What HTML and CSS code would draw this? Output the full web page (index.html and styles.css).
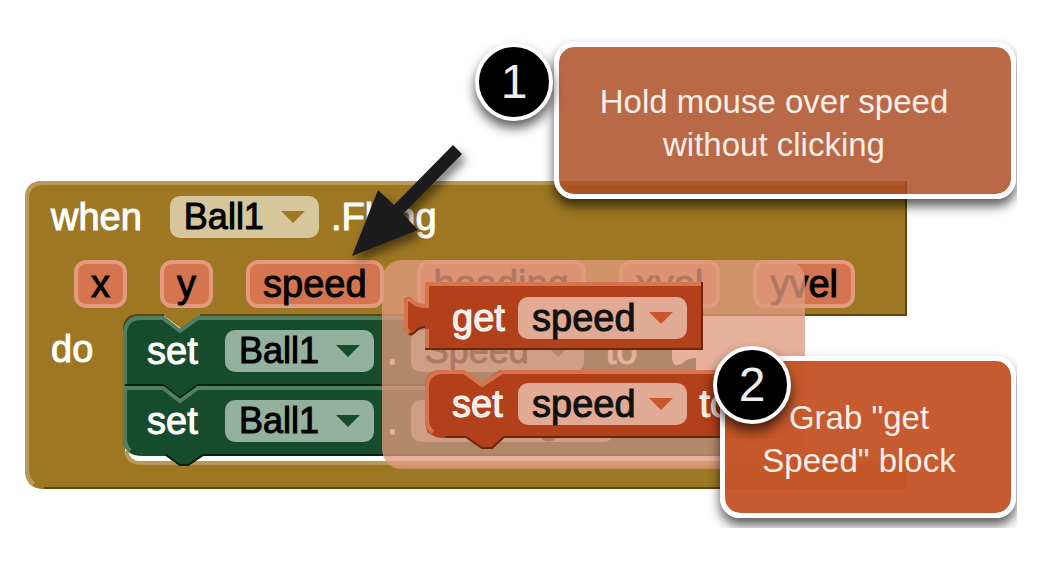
FILE: index.html
```html
<!DOCTYPE html>
<html lang="en">
<head>
<meta charset="utf-8">
<title>Ball1.Flung blocks</title>
<link rel="stylesheet" href="styles.css">
</head>
<body>
<main class="workspace">
  <section class="block event">
    <svg class="shape" width="886" height="314" viewBox="0 0 886 314" aria-hidden="true">
      <path class="gold" d="M18 2H883V137H176L158 150L140 137H113Q101 137 101 150V268Q101 284 116 284H883V310H20Q1 310 1 290V20Q1 2 18 2Z"/>
      <path class="gold-light" d="M882 4H20Q3 4 3 20V290Q3 301 10 305M102 272Q104 284 116 284H883"/>
      <path class="gold-dark" d="M882 2V136H176M140 136H113Q100 137 100 150M883 309H20"/>
    </svg>
    <div class="row title"><span class="word">when</span><button class="field gold-field">Ball1<i class="caret"></i></button><span class="word">.Flung</span></div>
    <div class="row params"><button class="param">x</button><button class="param">y</button><button class="param">speed</button><button class="param">heading</button><button class="param">xvel</button><button class="param">yvel</button></div>
    <div class="body">
      <span class="word do">do</span>
      <div class="stack">
        <div class="setter">
          <svg class="shape" width="610" height="90" viewBox="0 0 610 90" aria-hidden="true">
            <path class="green" d="M16 0H40L57 13L75 0H573V18Q562 18 559 15Q557 12 554 11Q549 11 549 16V42Q549 47 553 49Q557 50 561 46Q565 42 573 42V70H76L57 84L40 70H0V16Q0 0 16 0Z"/>
            <path class="green-light" d="M2 70V18Q2 2 18 2H40L57 15L75 2H573"/>
          </svg>
          <span class="word lead">set</span><button class="field green-field">Ball1<i class="caret"></i></button><span class="word">.</span><button class="field green-field">Speed<i class="caret"></i></button><span class="word tail">to</span>
        </div>
        <div class="setter">
          <svg class="shape" width="610" height="90" viewBox="0 0 610 90" aria-hidden="true">
            <path class="green" d="M0 0H40L57 13L75 0H604V70H80L65 80H57L43 70H20Q0 70 0 52Z"/>
            <path class="green-dark" d="M2 -1H40L57 12L75 -1H573M604 69H80L65 79H57L43 69"/>
            <path class="green-light" d="M2 2H40L57 15L75 2H604M2 0V52Q2 60 7 65"/>
          </svg>
          <span class="word lead">set</span><button class="field green-field">Ball1<i class="caret"></i></button><span class="word">.</span><button class="field green-field">Heading<i class="caret"></i></button>
        </div>
      </div>
    </div>
  </section>

  <section class="flyout" aria-label="speed blocks">
    <div class="getter">
      <svg class="shape" width="304" height="66" viewBox="0 0 304 66" aria-hidden="true">
        <path class="red" d="M21 -4H299V64H21V42Q16 42 12 46Q8 50 4 48Q0 46 0 40V16Q0 11 5 11Q8 12 10 15Q13 18 21 18Z"/>
        <path class="red-light" d="M299 -2H23V20Q13 20 9 16Q2 10 2 18V40Q2 44 5 47M23 43V62"/>
        <path class="red-dark" d="M298 -4V63H21M5 48Q8 50 12 45Q16 41 21 41"/>
      </svg>
      <span class="word lead">get</span><button class="field red-field">speed<i class="caret"></i></button>
    </div>
    <div class="getter setting">
      <svg class="shape" width="350" height="84" viewBox="0 0 350 84" aria-hidden="true">
        <path class="red" d="M17 0H39L57 13L75 0H350V68H79L67 79H57L41 68H20Q0 68 0 50V17Q0 0 17 0Z"/>
        <path class="red-light" d="M8 62Q2 58 2 50V18Q2 2 18 2H39L57 15L77 2H350"/>
        <path class="red-dark" d="M350 67H79L67 78H57L41 67H20"/>
      </svg>
      <span class="word lead">set</span><button class="field red-field">speed<i class="caret"></i></button><span class="word">to</span>
    </div>
  </section>

  <svg class="arrow" width="130" height="126" viewBox="0 0 130 126" aria-hidden="true">
    <path d="M113 5L122 14L63 74L78 90L12 116L38 50L54 65Z"/>
  </svg>
  <aside class="callout one"><p>Hold mouse over speed without clicking</p></aside>
  <span class="badge b1">1</span>
  <aside class="callout two"><p>Grab "get Speed" block</p></aside>
  <span class="badge b2">2</span>
</main>
</body>
</html>
```
FILE: styles.css
```css
body {
  margin: 0;
  background: #fff;
  font-family: "Liberation Sans", Arial, sans-serif;
}
.workspace {
  position: relative;
  min-height: 528px;
  max-width: 1017px;
  overflow: hidden;
}
button {
  font: inherit;
  border: 0;
  padding: 0;
  margin: 0;
}
.shape {
  position: absolute;
  left: 0;
  top: 0;
  z-index: -1;
  overflow: visible;
}
.gold { fill: #9d7722; }
.gold-light { fill: none; stroke: #b99a57; stroke-width: 4; }
.gold-dark { fill: none; stroke: #5f460f; stroke-width: 2; }
.green { fill: #164c2b; }
.green-light { fill: none; stroke: #50805f; stroke-width: 4; }
.green-dark { fill: none; stroke: #08210f; stroke-width: 2; }
.red { fill: #b2401a; }
.red-light { fill: none; stroke: #d67450; stroke-width: 4; }
.red-dark { fill: none; stroke: #6d250c; stroke-width: 2; }

.block, .getter {
  font-size: 38px;
  line-height: 42px;
}
.block {
  position: absolute;
  left: 24px;
  top: 179px;
  isolation: isolate;
}
.word { color: #fff; -webkit-text-stroke: 1px #fff; }
.row { display: flex; align-items: center; white-space: nowrap; }
.title { padding: 17px 0 0 27px; gap: 12px; }
.title .word:first-child { margin-right: 16px; }
.field {
  display: flex;
  align-items: center;
  gap: 17px;
  height: 42px;
  padding: 0 14px;
  border-radius: 10px;
  color: #000;
  font-size: 36px;
  -webkit-text-stroke: 1px currentColor;
}
.caret {
  border: 12px solid transparent;
  border-top-color: #9d7722;
  border-bottom: 0;
}
.gold-field { background: #d7c69b; }
.green-field { background: #94b09f; }
.green-field .caret { border-top-color: #164c2b; }
.red-field { gap: 13px; background: #e0aa94; color: #111; font-size: 38px; }
.red-field .caret { border-top-color: #c9562c; }
.params { padding: 22px 0 0 50px; gap: 33px; }
.param {
  height: 48px;
  padding: 0 13px;
  line-height: 38px;
  border: 4px solid #e39a7e;
  border-radius: 12px;
  background: #d57550;
  color: #000;
  -webkit-text-stroke: 1px #000;
}
.body { display: flex; padding: 8px 0 0 27px; }
.do { padding-top: 12px; width: 72px; }
.setter {
  position: relative;
  isolation: isolate;
  display: flex;
  align-items: center;
  gap: 13px;
  height: 70px;
  padding-left: 24px;
  white-space: nowrap;
}
.lead { min-width: 53px; }
.setter .lead { margin-right: 12px; }
.tail { margin-left: 9px; }

.flyout {
  position: absolute;
  left: 382px;
  top: 260px;
  width: 423px;
  height: 209px;
  border-radius: 20px;
  background: rgba(223, 154, 126, .78);
}
.getter {
  position: absolute;
  isolation: isolate;
  left: 22px;
  top: 26px;
  display: flex;
  align-items: center;
  gap: 13px;
  height: 64px;
  padding-left: 48px;
  white-space: nowrap;
}
.setting { left: 43px; top: 110px; height: 68px; padding-left: 27px; }
.getter .word { color: #fbe6dc; }

.arrow {
  position: absolute;
  left: 340px;
  top: 140px;
  fill: #1b1b1b;
  filter: drop-shadow(4px 6px 5px rgba(0, 0, 0, .5));
}
.callout {
  position: absolute;
  display: flex;
  align-items: center;
  justify-content: center;
  box-sizing: border-box;
  border: 5px solid #fff;
  border-radius: 20px;
  background-clip: padding-box;
  box-shadow: 0 7px 12px rgba(0, 0, 0, .65);
  color: #fbeee8;
  font-size: 33px;
  line-height: 43px;
  text-align: center;
}
.callout p { margin: 0; }
.one { left: 554px; top: 42px; width: 462px; height: 157px; padding: 4px 56px 0 34px; background-color: rgba(172, 75, 32, .83); }
.two { left: 720px; top: 356px; width: 296px; height: 162px; padding: 4px 46px 0 28px; background-color: rgba(196, 86, 40, .97); }
.badge {
  position: absolute;
  box-sizing: border-box;
  width: 78px;
  height: 78px;
  border: 4px solid #fff;
  border-radius: 50%;
  background: #000;
  box-shadow: 0 7px 12px rgba(0, 0, 0, .65);
  color: #eee;
  font-size: 48px;
  line-height: 70px;
  text-align: center;
}
.b1 { left: 475px; top: 43px; }
.b2 { left: 713px; top: 346px; }
```
